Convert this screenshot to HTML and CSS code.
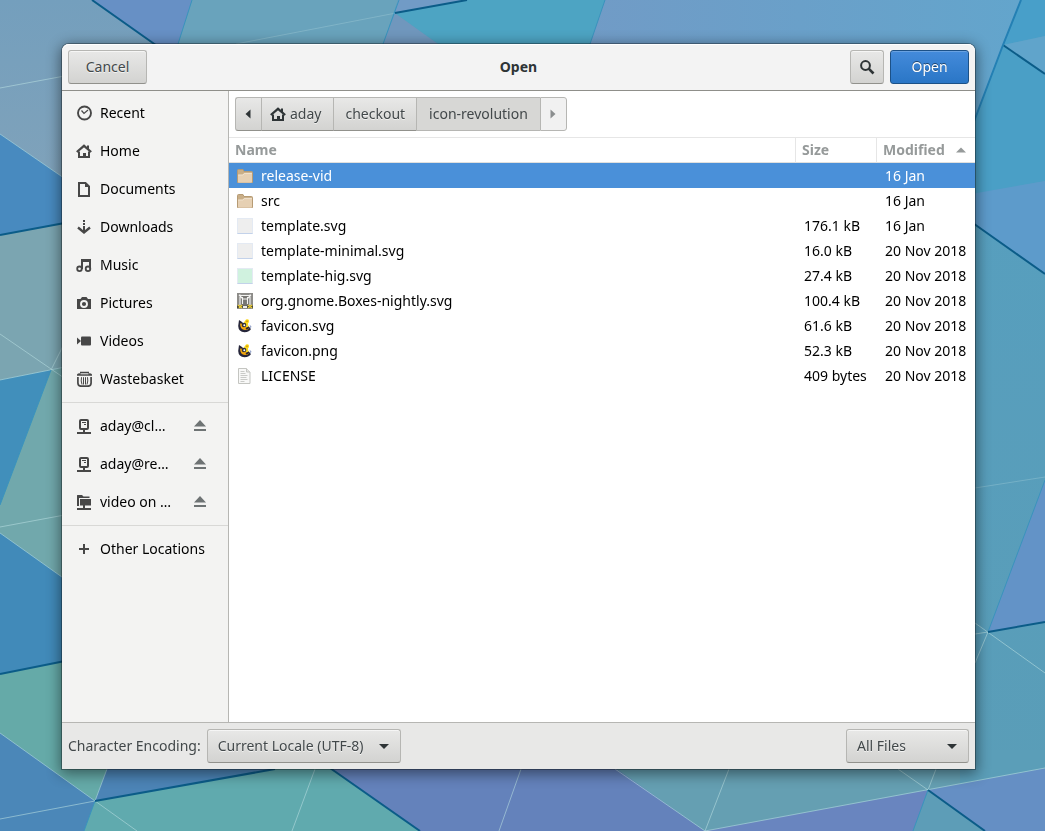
FILE: index.html
```html
<!DOCTYPE html>
<html lang="en">
<head>
<meta charset="utf-8">
<meta name="viewport" content="width=device-width, initial-scale=1">
<title>Open</title>
<link rel="stylesheet" href="styles.css">
</head>
<body>
<svg class="wallpaper" viewBox="0 0 1045 831" preserveAspectRatio="none" aria-hidden="true">
  <defs>
    <linearGradient id="wide" x1="0" x2="1"><stop offset="0" stop-color="#719bc6"/><stop offset="1" stop-color="#63a5cc"/></linearGradient>
    <linearGradient id="corner" x1="0" x2="0" y1="0" y2="1"><stop offset="0" stop-color="#749fbd"/><stop offset="1" stop-color="#83a3b9"/></linearGradient>
    <linearGradient id="ocean" x1="0" x2="0" y1="0" y2="1"><stop offset="0" stop-color="#569fc0"/><stop offset="1" stop-color="#5a9db7"/></linearGradient>
  </defs>
  <rect width="1045" height="831" fill="url(#ocean)"/>
  <path fill="url(#corner)" d="M0 0H92L154 44V240L0 134z"/>
  <path fill="#6790c5" d="M92 0H192L178 44V70H172L154 44z"/>
  <path fill="#69a3bc" d="M192 0H398L383 44V70H170L178 44z"/>
  <path fill="#719bc6" d="M398 0H467L395 13z"/>
  <path fill="#7097bd" d="M395 13L438 44V70H375L383 44z"/>
  <path fill="#4da4c3" d="M467 0H605L590 44V70H475L395 13z"/>
  <path fill="url(#wide)" d="M605 0H1021L1003 45L975 119H580L590 44z"/>
  <path fill="#489fc9" d="M1021 0H1045V36L1003 45z"/>
  <path fill="#60a4cb" d="M1003 45L1045 36V74z"/>
  <path fill="#4a9fc6" d="M1003 45L1045 74V181L975 194V119z"/>
  <path fill="#5d9bcb" d="M960 196L1045 181V274L960 214z"/>
  <path fill="#6393c7" d="M988 632L1045 480V622z"/>
  <path fill="#488abf" d="M0 134L90 196V218L0 235z"/>
  <path fill="#7ba5b1" d="M0 235L90 218V362L0 380z"/>
  <path fill="#418fbb" d="M0 380L51 370L0 505z"/>
  <path fill="#71a8ac" d="M51 370L90 362V597L0 533V505z"/>
  <path fill="#418ab9" d="M0 533L90 597V656L0 674z"/>
  <path fill="#65aaa8" d="M0 674L90 656V797L0 733z"/>
  <path fill="#4b87b8" d="M0 733L95 801L84 831H0z"/>
  <path fill="#65aaa8" d="M40 750H114L95 801z"/>
  <path fill="#4c84b6" d="M114 750H330L275 769L95 801z"/>
  <path fill="#60aaae" d="M95 801L275 769V750H305L420 831H84z"/>
  <path fill="#6482bb" d="M305 750H590L705 831H420z"/>
  <path fill="#659fb2" d="M590 750H1020L1045 768L705 831z"/>
  <path fill="#6985bf" d="M705 831L928 790L913 831z"/>
  <path fill="#5d9db7" d="M928 790L913 831H985z"/>
  <path fill="#658fc4" d="M928 790L1045 768V831H985z"/>
  <path fill="#5b9eb8" d="M960 750H1045V768L960 784z"/>
  <g class="ridge">
    <path d="M0 88L70 75M0 134L90 196M0 334L70 382M0 380L70 366M51 370L66 340M0 527L70 514M0 533L90 597M0 733L137 831M0 819L95 801L107 769M315 769L292 831M521 769L499 831M615 769L705 831L1045 768M729 769L705 831M898 769L928 790L936 769M975 623L1045 673M975 634L988 632L975 663"/>
  </g>
  <g class="ridge faint"><path d="M236 44L396 13M975 488L1045 477"/></g>
  <g class="edge edge-soft"><path d="M192 0L178 44M399 0L383 44M605 0L590 44M1045 480L988 632M51 370L0 505M928 790L913 831M95 801L84 831"/></g>
  <g class="edge"><path d="M92 0L160 48M467 0L395 13M1003 45L1045 74M970 221L1045 274M988 632L1045 622M0 235L70 222M0 674L70 660M95 801L275 769M330 768L420 831M928 790L985 831"/></g>
  <g class="edge edge-mid"><path d="M1021 0L1003 45L970 132"/></g>
</svg>

<svg class="symbols" aria-hidden="true">
  <symbol id="i-home" viewBox="0 0 16 16"><path d="M.8 9L8 2.800L15.200 9" fill="none" stroke="currentColor" stroke-width="2.200"/><path d="M3 8.500V14H13V8.500" fill="none" stroke="currentColor" stroke-width="2"/><path d="M7 10h3v4H7zM11 2.500h2v4h-2z" fill="currentColor"/></symbol>
  <symbol id="i-server" viewBox="0 0 16 16"><rect x="4" y="2" width="8" height="9" rx="1" fill="none" stroke="currentColor" stroke-width="2"/><path d="M6 4h4v1H6zM8 6h2v1H8zM7 11h2v3H7zM1 14h14v2H1z" fill="currentColor"/></symbol>
  <symbol id="i-eject" viewBox="0 0 16 16"><path d="M8 2L14 8.500H2zM2 11h12v2H2z" fill="currentColor"/></symbol>
  <symbol id="i-folder" viewBox="0 0 16 16"><path d="M.5 2.500q0-1 1-1h4.500l1 2h7.500q1 0 1 1v10h-15z" fill="#c9ae87" stroke="#b69b74"/><path d="M1 7.500q0-.8.800-.8h3.800l1.600-1.700H14q1 0 1 1V14q0 .8-.8.800H1.800Q1 14.800 1 14z" fill="#e6d0b3"/><path d="M1 7h5l1.400-1.600H15" fill="none" stroke="#f3e6d4" stroke-width=".8"/></symbol>
  <symbol id="i-favicon" viewBox="0 0 16 16"><path d="M2 2L1.200 8Q1.500 14 7.500 14.300Q12.500 14 14 11L12 9L8 7L5 4z" fill="#26263a"/><path d="M3 5.500Q3 11.500 8 12Q11.500 12 12.500 9.500L8 6z" fill="#f2a60d"/><path d="M6.500 5L9 1.500Q11.500.8 12 2.500Q12.200 4.500 11 5.500L11.500 9L7 9z" fill="#f9d71c"/><circle cx="7" cy="7" r="2.300" fill="#30303a"/><circle cx="7.300" cy="7.200" r="1" fill="#fff"/><circle cx="10" cy="3.300" r=".8" fill="#c88a00"/><path d="M8.500 10L12 8.500L12.500 10L9.500 11.500z" fill="#222235"/><path d="M12.500 6.500L14.500 8.500L13.500 11z" fill="#9aa8cc"/></symbol>
</svg>

<main class="dialog" role="dialog" aria-labelledby="dialog-title">
  <header class="titlebar">
    <button class="btn wide" type="button">Cancel</button>
    <h1 class="title" id="dialog-title">Open</h1>
    <div class="actions">
      <button class="btn square" type="button" aria-label="Search"><svg class="icon" viewBox="0 0 16 16"><circle cx="6.500" cy="6.500" r="4.400" fill="none" stroke="currentColor" stroke-width="2"/><path d="M9.700 9.700L14.500 14.500" stroke="currentColor" stroke-width="2.600"/></svg></button>
      <button class="btn wide primary" type="button">Open</button>
    </div>
  </header>

  <div class="content">
    <nav class="sidebar" aria-label="Places">
      <a class="place" href="#recent"><svg class="icon" viewBox="0 0 16 16"><circle cx="8.500" cy="8" r="6.500" fill="none" stroke="currentColor" stroke-width="1.900"/><path d="M5.500 5.500L8 8.500L12 5" fill="none" stroke="currentColor" stroke-width="1.200"/></svg><span>Recent</span></a>
      <a class="place" href="#home"><svg class="icon"><use href="#i-home"/></svg><span>Home</span></a>
      <a class="place" href="#documents"><svg class="icon" viewBox="0 0 16 16"><path d="M3 2H9.500L13 5.500V15H3z" fill="none" stroke="currentColor" stroke-width="2"/><path d="M9 1v5h5z" fill="currentColor"/></svg><span>Documents</span></a>
      <a class="place" href="#downloads"><svg class="icon" viewBox="0 0 16 16"><path d="M7 1h2v2H7zM7 4h2v2H7zM7 7h2v6H7z" fill="currentColor"/><path d="M2 8.500L8 13.500L14 8.500" fill="none" stroke="currentColor" stroke-width="2.300"/></svg><span>Downloads</span></a>
      <a class="place" href="#music"><svg class="icon" viewBox="0 0 16 16"><path d="M6 12V3H14V11.500" fill="none" stroke="currentColor" stroke-width="2"/><path d="M6 2h9v3H6z" fill="currentColor"/><circle cx="3.500" cy="11.800" r="2.300" fill="none" stroke="currentColor" stroke-width="1.800"/><circle cx="12" cy="11.800" r="2.300" fill="none" stroke="currentColor" stroke-width="1.800"/></svg><span>Music</span></a>
      <a class="place" href="#pictures"><svg class="icon" viewBox="0 0 16 16"><path d="M6 2h4.500L12 4h3v10H1V4h3.500z" fill="currentColor"/><circle cx="8" cy="9" r="3" fill="none" stroke="#f3f3f2" stroke-width="1.900"/></svg><span>Pictures</span></a>
      <a class="place" href="#videos"><svg class="icon" viewBox="0 0 16 16"><path d="M1 4.500L5 8L1 11.500z" fill="currentColor"/><rect x="5" y="3.500" width="10" height="9" rx="1" fill="currentColor"/></svg><span>Videos</span></a>
      <a class="place" href="#wastebasket"><svg class="icon" viewBox="0 0 16 16"><path d="M1 4.800V3.500Q1.500 2.300 4 2.300V.8H13V2.300Q15.500 2.300 16 3.500V4.800z" fill="currentColor"/><path d="M4.500 2.800h8" stroke="#f3f3f2"/><path d="M1.900 6V12Q2 15.200 5 15.200H12Q15 15.200 15.100 12V6" fill="none" stroke="currentColor" stroke-width="1.700"/><path d="M5.500 6.200Q4.700 10 6 13.500M7.500 6.200V13.500M9.500 6.200V13.500M11.500 6.200Q12.300 10 11 13.500" fill="none" stroke="currentColor" stroke-width="1"/></svg><span>Wastebasket</span></a>
      <hr class="rule">
      <div class="mount"><a class="place" href="#server-1"><svg class="icon"><use href="#i-server"/></svg><span>aday@cl…</span></a><button class="eject" type="button" aria-label="Eject aday@cl…"><svg class="icon"><use href="#i-eject"/></svg></button></div>
      <div class="mount"><a class="place" href="#server-2"><svg class="icon"><use href="#i-server"/></svg><span>aday@re…</span></a><button class="eject" type="button" aria-label="Eject aday@re…"><svg class="icon"><use href="#i-eject"/></svg></button></div>
      <div class="mount"><a class="place" href="#share"><svg class="icon" viewBox="0 0 16 16"><path d="M1 1.500Q1 1 1.500 1H6L7.500 2.500H13.500V4H3V12H1zM4 5h11v6.500H4zM7 11h2v3H7zM1 14h14v2H1z" fill="currentColor"/></svg><span>video on …</span></a><button class="eject" type="button" aria-label="Eject video on …"><svg class="icon"><use href="#i-eject"/></svg></button></div>
      <hr class="rule">
      <a class="place" href="#other"><svg class="icon" viewBox="0 0 16 16"><path d="M7 3h2v4h4v2H9v4H7V9H3V7h4z" fill="currentColor"/></svg><span>Other Locations</span></a>
    </nav>

    <section class="browser" aria-label="Files">
      <div class="pathbar">
        <button class="crumb arrow" type="button" aria-label="Back"><svg class="icon" viewBox="0 0 16 16"><path d="M10.500 3.500v9L5.500 8z" fill="currentColor"/></svg></button>
        <button class="crumb with-icon" type="button"><svg class="icon"><use href="#i-home"/></svg>aday</button>
        <button class="crumb" type="button">checkout</button>
        <button class="crumb current" type="button" aria-current="page">icon-revolution</button>
        <button class="crumb arrow" type="button" disabled aria-label="Forward"><svg class="icon" viewBox="0 0 16 16"><path d="M5.500 3.500v9L10.500 8z" fill="currentColor"/></svg></button>
      </div>
      <table class="files">
        <colgroup><col><col class="col-size"><col class="col-date"></colgroup>
        <thead><tr><th>Name</th><th>Size</th><th aria-sort="ascending"><span class="sorted">Modified<svg class="icon" viewBox="0 0 16 16"><path d="M8 5.500L13 10.500H3z" fill="currentColor"/></svg></span></th></tr></thead>
        <tbody>
          <tr class="selected"><td><span class="file"><svg class="icon"><use href="#i-folder"/></svg>release-vid</span></td><td></td><td>16 Jan</td></tr>
          <tr><td><span class="file"><svg class="icon"><use href="#i-folder"/></svg>src</span></td><td></td><td>16 Jan</td></tr>
          <tr><td><span class="file"><i class="thumb"></i>template.svg</span></td><td>176.1 kB</td><td>16 Jan</td></tr>
          <tr><td><span class="file"><i class="thumb"></i>template-minimal.svg</span></td><td>16.0 kB</td><td>20 Nov 2018</td></tr>
          <tr><td><span class="file"><i class="thumb mint"></i>template-hig.svg</span></td><td>27.4 kB</td><td>20 Nov 2018</td></tr>
          <tr><td><span class="file"><svg class="icon" viewBox="0 0 16 16"><path d="M0 0h16v16H0z" fill="#8d8c89"/><path d="M4 3h8v9H4z" fill="#777673"/><path d="M3 1.500V12M13 1.500V12M2 2.500h12M5.500 4v7M10.500 4v7M5 6h6M2 2l4 4M14 2l-4 4" stroke="#f4f4f2" stroke-width="1.100" fill="none"/><path d="M0 12.500h16V15H0z" fill="#4a4a3c"/><path d="M1 12l4 3M5 12l-3 3M11 12l4 3M15 12l-4 3" stroke="#edcf35" stroke-width="1.500"/><path d="M6 13h4v2H6z" fill="#eee"/></svg>org.gnome.Boxes-nightly.svg</span></td><td>100.4 kB</td><td>20 Nov 2018</td></tr>
          <tr><td><span class="file"><svg class="icon"><use href="#i-favicon"/></svg>favicon.svg</span></td><td>61.6 kB</td><td>20 Nov 2018</td></tr>
          <tr><td><span class="file"><svg class="icon"><use href="#i-favicon"/></svg>favicon.png</span></td><td>52.3 kB</td><td>20 Nov 2018</td></tr>
          <tr><td><span class="file"><svg class="icon" viewBox="0 0 16 16"><path d="M1.500.5h8l3.500 3.500v11.500H1.500z" fill="#f8f8f7" stroke="#c4c5c1"/><path d="M9.500.5V4H13" fill="#e6e6e4" stroke="#c4c5c1"/><path d="M3.500 3.500h4M3.500 5.500h5M3.500 7.500h7M3.500 9.500h6M3.500 11.500h7M3.500 13.500h4" stroke="#c9cac7" fill="none"/></svg>LICENSE</span></td><td>409 bytes</td><td>20 Nov 2018</td></tr>
        </tbody>
      </table>
    </section>
  </div>

  <footer class="bottombar">
    <label for="encoding">Character Encoding:</label>
    <span class="dropdown encoding"><select class="btn" id="encoding"><option>Current Locale (UTF-8)</option></select></span>
    <span class="dropdown filter"><select class="btn" aria-label="File type"><option>All Files</option></select></span>
  </footer>
</main>
</body>
</html>
```
FILE: styles.css
```css
* { box-sizing: border-box; }

body {
  margin: 0;
  min-height: 100vh;
  padding: 44px 70px 62px 62px;
  display: flex;
  font: 14px/20px "Noto Sans", "Open Sans", sans-serif;
  color: #000;
  background: #5a9fb8;
}

.wallpaper {
  position: fixed;
  inset: 0;
  z-index: -1;
  width: 100%;
  height: 100%;
}
.ridge { fill: none; stroke: #b5dce0; stroke-width: 1; opacity: .6; }
.ridge.faint { opacity: .3; }
.edge { fill: none; stroke: #0b5c88; stroke-width: 2; }
.edge-mid { stroke: #2480b4; }
.edge-soft { stroke: #3a93bd; stroke-width: 1; }

.symbols { position: absolute; width: 0; height: 0; }
.icon { width: 16px; height: 16px; flex: none; display: block; }

.dialog {
  flex: 1;
  min-width: 0;
  display: flex;
  flex-direction: column;
  border-radius: 7px 7px 0 0;
  background: #fff;
  box-shadow: 0 3px 14px 2px rgba(0, 0, 0, .45), 0 0 0 1px rgba(0, 0, 0, .3);
}

.titlebar {
  display: grid;
  grid-template-columns: 1fr auto 1fr;
  align-items: center;
  padding: 6px;
  border-bottom: 1px solid #8f8f8a;
  border-radius: 7px 7px 0 0;
  background: #f3f3f3;
  box-shadow: inset 0 1px #fff;
}
.title { margin: 0; font-size: 14px; line-height: 20px; color: #2e3436; }
.actions { display: flex; justify-content: flex-end; gap: 6px; }

.btn {
  height: 34px;
  padding: 0 10px;
  border: 1px solid #b6b6b3;
  border-bottom-color: #91918c;
  border-radius: 3px;
  background: linear-gradient(#e8e8e7, #d3d3d1);
  box-shadow: inset 0 1px rgba(255, 255, 255, .6);
  color: #42484a;
  font: inherit;
  text-shadow: 0 1px rgba(255, 255, 255, .7);
}
.btn.wide { width: 79px; }
.titlebar > .btn { justify-self: start; }
.btn.square { width: 34px; padding: 0 8px; color: #2e3436; }
.btn.primary {
  border-color: #1c5187;
  background: linear-gradient(#448bdb, #2a76c6);
  box-shadow: inset 0 1px rgba(255, 255, 255, .2);
  color: #fff;
  text-shadow: 0 -1px rgba(0, 0, 0, .5);
}

.content { flex: 1; display: flex; min-height: 0; }

.sidebar {
  flex: none;
  width: 167px;
  padding-top: 3px;
  border-right: 1px solid #b6b6b3;
  background: #f3f3f2;
}
.place {
  flex: 1;
  display: flex;
  align-items: center;
  gap: 8px;
  height: 38px;
  padding-left: 14px;
  color: #000;
  text-decoration: none;
  white-space: nowrap;
}
.place .icon { color: #474747; }
.rule { margin: 4px 0; border: 0; border-top: 1px solid #d8d8d6; }
.mount { display: flex; align-items: center; padding-right: 20px; }
.eject { padding: 0; border: 0; background: none; color: #6e7374; }

.browser { flex: 1; min-width: 0; }
.pathbar { display: flex; padding: 6px; border-bottom: 1px solid #e6e6e6; }
.crumb {
  display: flex;
  align-items: center;
  gap: 4px;
  height: 34px;
  padding: 0 11px;
  border: 1px solid #b6b6b3;
  border-bottom-color: #91918c;
  border-right-width: 0;
  background: linear-gradient(#e8e8e7, #d3d3d1);
  color: #42484a;
  font: inherit;
  text-shadow: 0 1px rgba(255, 255, 255, .6);
}
.crumb .icon { color: #2e3436; }
.crumb.with-icon { padding: 0 12px 0 8px; }
.crumb.arrow { padding: 0 5px 0 4px; }
.crumb:first-child { border-radius: 3px 0 0 3px; }
.crumb:last-child { border-right-width: 1px; border-radius: 0 3px 3px 0; }
.crumb.current { padding: 0 12px; background: #d7d7d5; border-color: #b6b6b3; text-shadow: none; }
.crumb:disabled { background: #f1f1f1; border-color: #b6b6b3; }
.crumb:disabled .icon { color: #8b8e8f; }

.files { width: 100%; table-layout: fixed; border-collapse: separate; border-spacing: 0; }
.col-size { width: 81px; }
.col-date { width: 99px; }
.files th {
  height: 25px;
  padding: 0 6px;
  border-bottom: 1px solid #e0e0de;
  text-align: left;
  color: #969a9a;
}
.files th + th { border-left: 1px solid #e6e6e6; }
.files td { height: 25px; padding: 0 0 0 9px; white-space: nowrap; }
.files td:first-child { padding-left: 8px; }
.files .selected td { background: #4a90d9; color: #fff; }
.sorted { display: flex; align-items: center; justify-content: space-between; }
.file { display: flex; align-items: center; gap: 8px; }
.thumb {
  width: 16px;
  height: 16px;
  border: 1px solid #e4eaf3;
  border-bottom-color: #c3d2ea;
  background: #eee;
}
.thumb.mint { background: #d0f2df; }

.bottombar {
  display: flex;
  align-items: center;
  gap: 6px;
  padding: 6px;
  border-top: 1px solid #b6b6b3;
  background: #e8e8e7;
  color: #42484a;
}
.dropdown { position: relative; }
.dropdown::after {
  content: "";
  position: absolute;
  right: 12px;
  top: 15px;
  border: 5px solid transparent;
  border-top-color: #2e3436;
  border-bottom: 0;
  pointer-events: none;
}
.dropdown select { display: block; padding-right: 30px; appearance: none; }
.encoding select { width: 194px; }
.filter { margin-left: auto; }
.filter select { width: 123px; }
```
